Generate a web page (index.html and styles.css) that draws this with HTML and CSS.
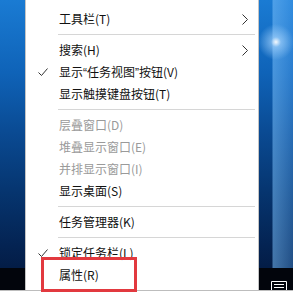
FILE: index.html
```html
<!DOCTYPE html>
<html lang="zh-CN">
<head>
<meta charset="utf-8">
<link rel="stylesheet" href="styles.css">
</head>
<body>
<div class="screen">
  <div class="desktop">
    <div class="wallpaper"></div>
    <div class="taskbar">
      <svg class="tray-icon" width="16" height="9" viewBox="0 0 16 9">
        <path d="M0.5 9 V0.5 H15.5 V9" fill="none" stroke="#fff" stroke-width="1"/>
        <path d="M3 3.5 H13 M3 6.5 H13" stroke="#fff" stroke-width="1"/>
      </svg>
    </div>
    <div class="menu">
      <div class="item"><span class="check"></span><span class="label">工具栏(T)</span><span class="sub"><svg width="6" height="11" viewBox="0 0 6 11"><path d="M0.5 0.5 L5.5 5.5 L0.5 10.5" fill="none" stroke="#333" stroke-width="1"/></svg></span></div>
      <div class="sep"></div>
      <div class="item"><span class="check"></span><span class="label">搜索(H)</span><span class="sub"><svg width="6" height="11" viewBox="0 0 6 11"><path d="M0.5 0.5 L5.5 5.5 L0.5 10.5" fill="none" stroke="#333" stroke-width="1"/></svg></span></div>
      <div class="item"><span class="check"><svg width="10" height="9" viewBox="0 0 10 9"><path d="M0.5 4.5 L3.5 7.5 L9.5 0.5" fill="none" stroke="#333" stroke-width="1"/></svg></span><span class="label">显示<span class="quote">“</span>任务视图<span class="quote">”</span>按钮(V)</span><span class="sub"></span></div>
      <div class="item"><span class="check"></span><span class="label">显示触摸键盘按钮(T)</span><span class="sub"></span></div>
      <div class="sep"></div>
      <div class="item disabled"><span class="check"></span><span class="label">层叠窗口(D)</span><span class="sub"></span></div>
      <div class="item disabled"><span class="check"></span><span class="label">堆叠显示窗口(E)</span><span class="sub"></span></div>
      <div class="item disabled"><span class="check"></span><span class="label">并排显示窗口(I)</span><span class="sub"></span></div>
      <div class="item"><span class="check"></span><span class="label">显示桌面(S)</span><span class="sub"></span></div>
      <div class="sep"></div>
      <div class="item"><span class="check"></span><span class="label">任务管理器(K)</span><span class="sub"></span></div>
      <div class="sep"></div>
      <div class="item"><span class="check"><svg width="10" height="9" viewBox="0 0 10 9"><path d="M0.5 4.5 L3.5 7.5 L9.5 0.5" fill="none" stroke="#333" stroke-width="1"/></svg></span><span class="label">锁定任务栏(L)</span><span class="sub"></span></div>
      <div class="item"><span class="check"></span><span class="label">属性(R)</span><span class="sub"></span></div>
    </div>
    <div class="highlight"></div>
  </div>
  <div class="bottom-edge"></div>
</div>
</body>
</html>
```
FILE: styles.css
```css
html, body {
  margin: 0;
  padding: 0;
  background: #fff;
}
.screen {
  width: 293px;
  height: 294px;
  overflow: hidden;
  display: flex;
  flex-direction: column;
  font-family: "Noto Sans CJK SC", "Noto Sans", sans-serif;
}
.desktop {
  position: relative;
  height: 290px;
  display: flex;
  flex-direction: column;
  background:
    radial-gradient(circle at 276px 42px, rgba(255,255,255,0.95) 0, rgba(170,215,255,0.6) 5px, rgba(80,160,240,0) 18px),
    linear-gradient(to right, rgba(0,0,0,0) 272px, rgba(120,190,250,0.55) 273px, rgba(90,170,245,0.35) 293px),
    linear-gradient(to bottom, #1a7bd3 0%, #0f63b8 25%, #0a4b94 45%, #063671 65%, #042352 85%, #02163a 100%);
}
.wallpaper {
  flex: 1;
}
.taskbar {
  height: 22px;
  background: #02050c;
  display: flex;
  justify-content: flex-end;
  align-items: flex-end;
  padding-right: 6px;
}
.tray-icon {
  display: block;
}
.menu {
  position: absolute;
  left: 25px;
  top: 0;
  width: 234px;
  height: 290px;
  box-sizing: border-box;
  background: #fff;
  border-left: 1px solid #c4c4c4;
  border-right: 1px solid #c4c4c4;
  padding-top: 8px;
  font-size: 12px;
  color: #111;
}
.item {
  height: 22px;
  display: grid;
  grid-template-columns: 33px 1fr 16px;
  align-items: center;
}
.check {
  display: flex;
  padding-left: 12px;
}
.check svg, .sub svg {
  display: block;
}
.label {
  white-space: nowrap;
  line-height: 22px;
}
.quote {
  font-family: "Liberation Sans", sans-serif;
}
.sub {
  display: flex;
}
.disabled {
  color: #9a9a9a;
}
.sep {
  height: 1px;
  background: #d6d6d6;
  margin: 4px 3px 4px 32px;
}
.highlight {
  position: absolute;
  left: 41px;
  top: 257px;
  width: 96px;
  height: 35px;
  box-sizing: border-box;
  border: 3px solid #e2393f;
}
.bottom-edge {
  height: 4px;
  border-top: 1px solid #bdbdbd;
  background: #fff;
  box-sizing: border-box;
}
```
